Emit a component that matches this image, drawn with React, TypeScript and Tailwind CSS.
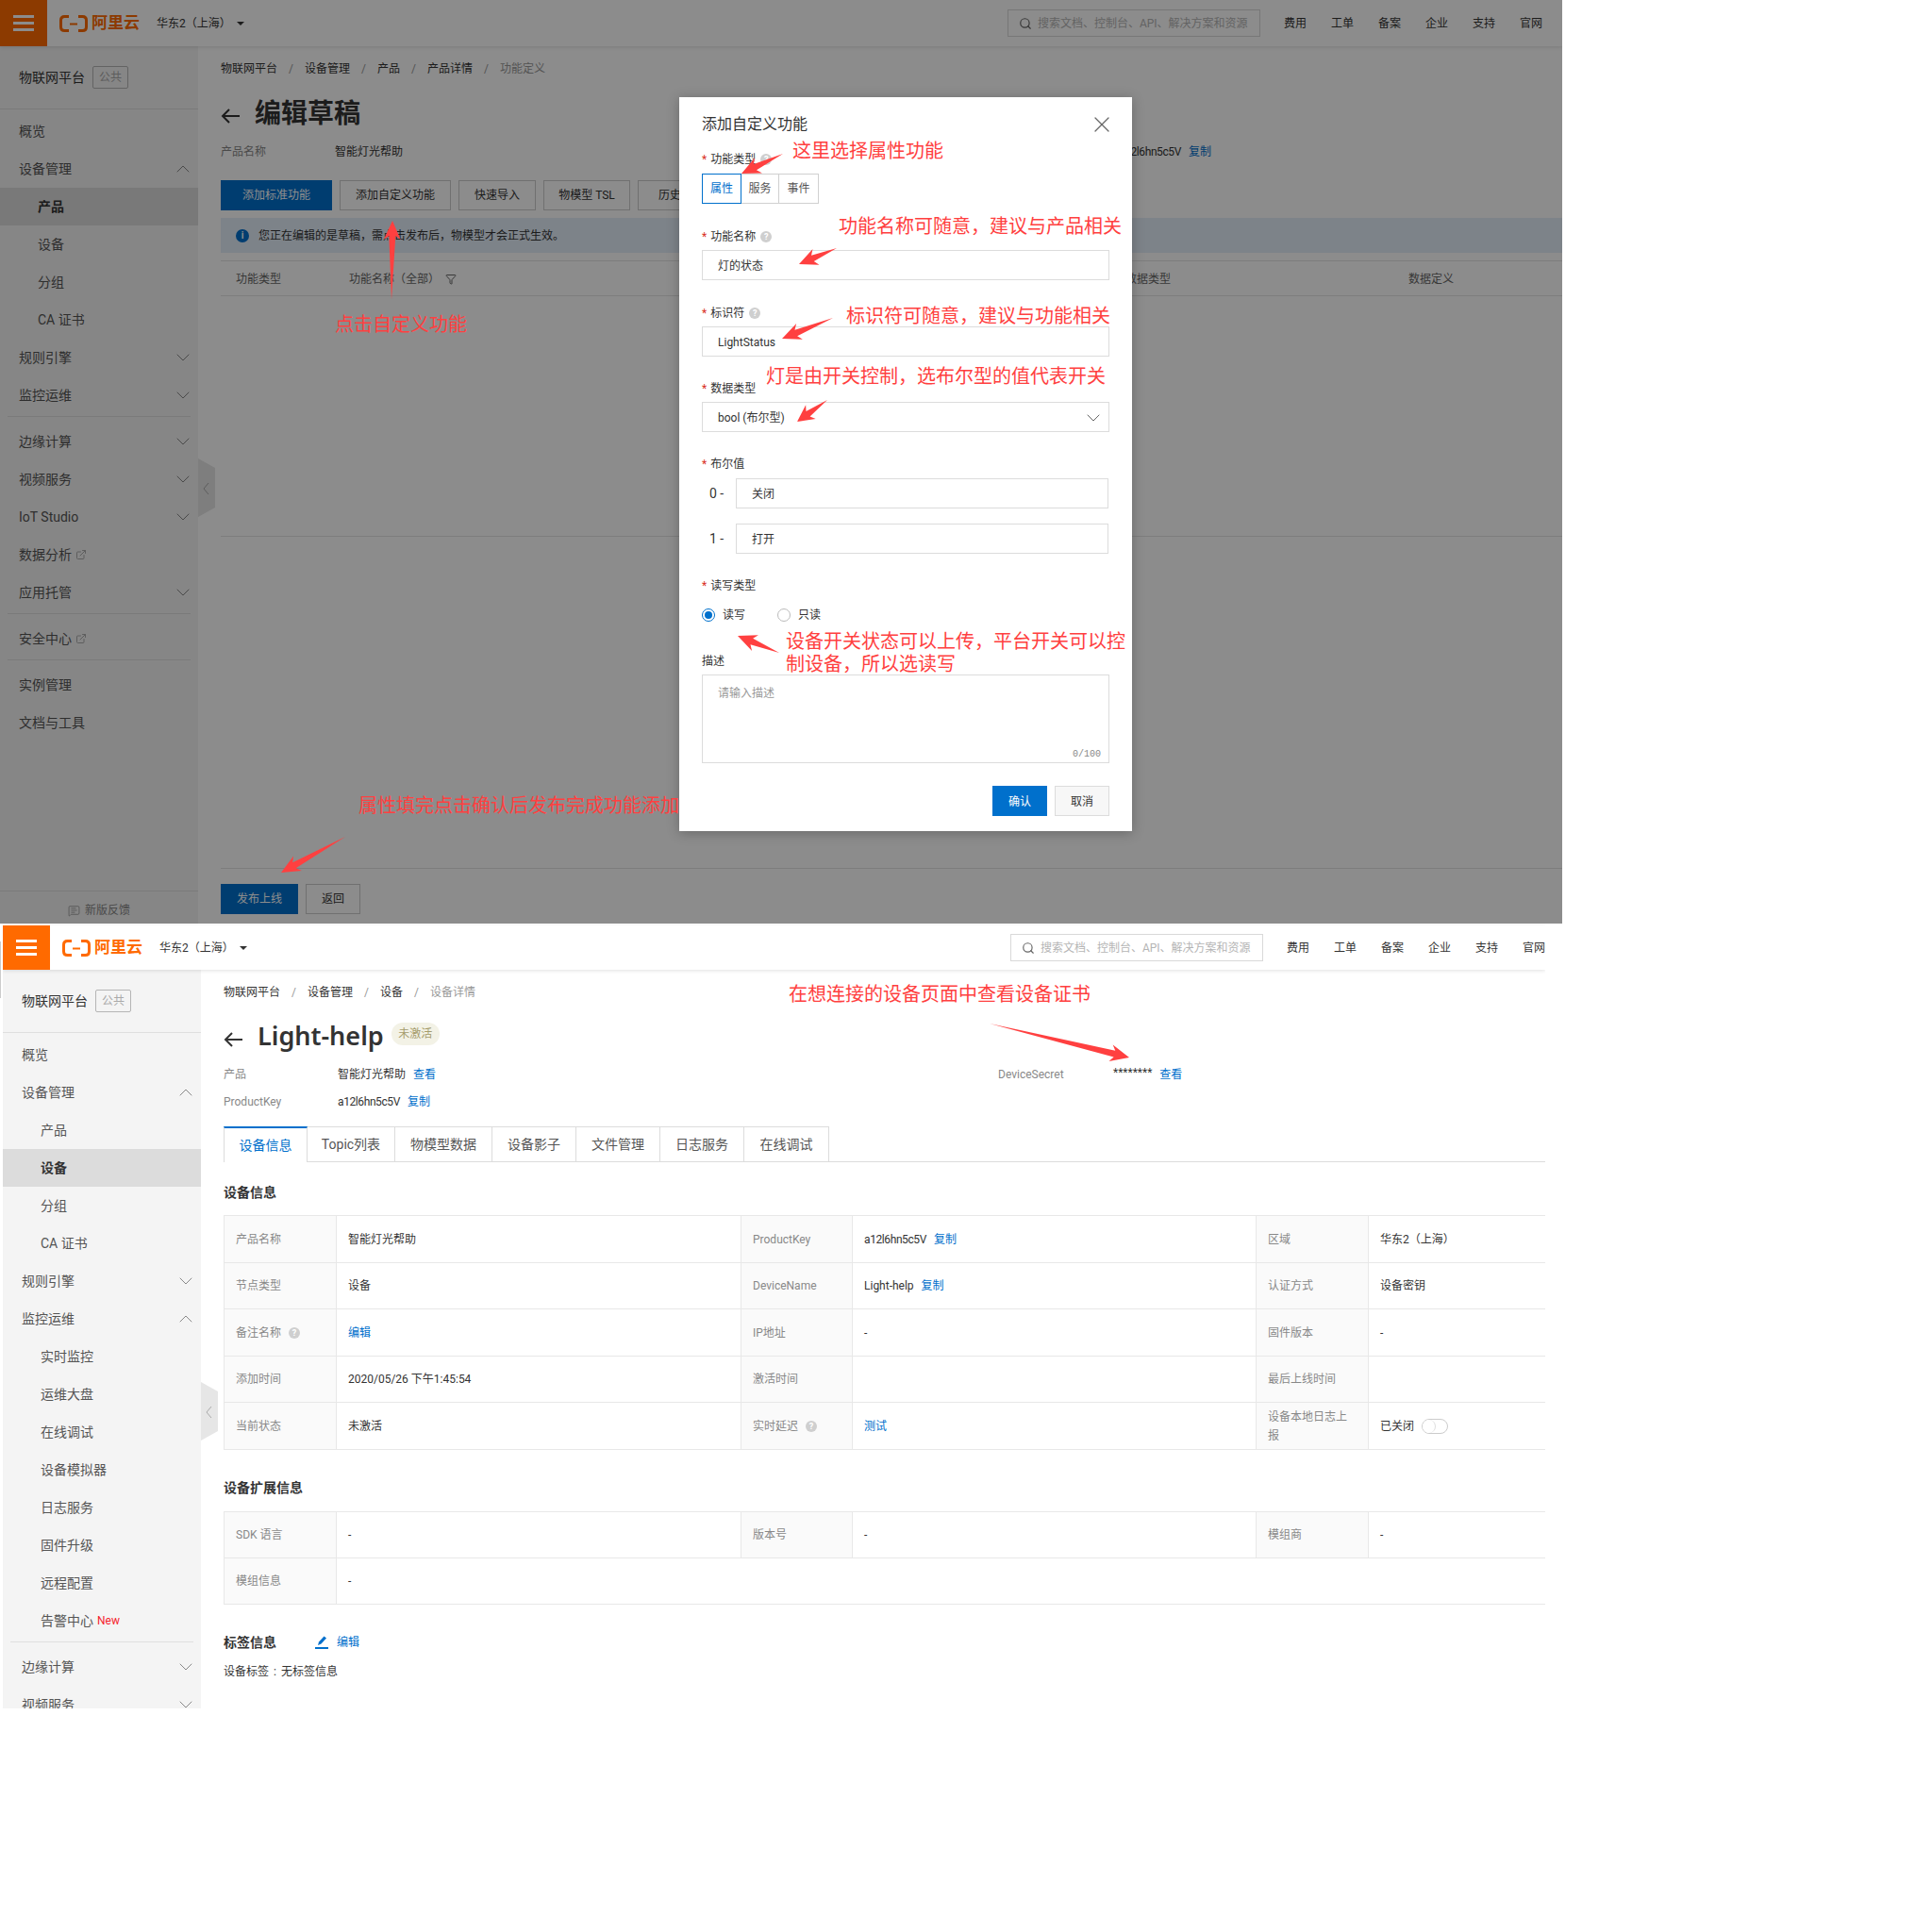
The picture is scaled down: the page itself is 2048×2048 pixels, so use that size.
import { ChevronDown, ChevronUp, ExternalLink, Filter, MessageSquareText, Search, X } from 'lucide-react';
import type { ReactNode } from 'react';

type NavItem = { label: string; sub?: boolean; active?: boolean; arrow?: 'up' | 'down'; ext?: boolean; isNew?: boolean; divider?: boolean };

const topNav: NavItem[] = [
  { label: '概览' },
  { label: '设备管理', arrow: 'up' },
  { label: '产品', sub: true, active: true },
  { label: '设备', sub: true },
  { label: '分组', sub: true },
  { label: 'CA 证书', sub: true },
  { label: '规则引擎', arrow: 'down' },
  { label: '监控运维', arrow: 'down', divider: true },
  { label: '边缘计算', arrow: 'down' },
  { label: '视频服务', arrow: 'down' },
  { label: 'IoT Studio', arrow: 'down' },
  { label: '数据分析', ext: true },
  { label: '应用托管', arrow: 'down', divider: true },
  { label: '安全中心', ext: true, divider: true },
  { label: '实例管理' },
  { label: '文档与工具' },
];

const bottomNav: NavItem[] = [
  { label: '概览' },
  { label: '设备管理', arrow: 'up' },
  { label: '产品', sub: true },
  { label: '设备', sub: true, active: true },
  { label: '分组', sub: true },
  { label: 'CA 证书', sub: true },
  { label: '规则引擎', arrow: 'down' },
  { label: '监控运维', arrow: 'up' },
  { label: '实时监控', sub: true },
  { label: '运维大盘', sub: true },
  { label: '在线调试', sub: true },
  { label: '设备模拟器', sub: true },
  { label: '日志服务', sub: true },
  { label: '固件升级', sub: true },
  { label: '远程配置', sub: true },
  { label: '告警中心', sub: true, isNew: true, divider: true },
  { label: '边缘计算', arrow: 'down' },
  { label: '视频服务', arrow: 'down' },
];

const arrows: [number, number, number, number][] = [
  [415, 318, 416, 234],
  [830, 163, 786, 184],
  [887, 263, 847, 280],
  [883, 337, 829, 359],
  [877, 424, 845, 447],
  [826, 692, 782, 674],
  [366, 887, 298, 925],
  [1049, 1085, 1197, 1121],
];

// thin tail that widens to a neck, then a swept head
function arrowPoints([x1, y1, x2, y2]: [number, number, number, number]) {
  const len = Math.hypot(x2 - x1, y2 - y1);
  const ux = (x2 - x1) / len;
  const uy = (y2 - y1) / len;
  const at = (back: number, side: number) => `${x2 - ux * back - uy * side},${y2 - uy * back + ux * side}`;
  const head = Math.min(20, len * 0.45);
  return [`${x1},${y1}`, at(head * 0.8, 3.5), at(head, 9), `${x2},${y2}`, at(head, -9), at(head * 0.8, -3.5)].join(' ');
}

function Logo() {
  return (
    <div className="flex items-center gap-[4px] text-[#ff6a00]">
      <svg width="30" height="18" viewBox="0 0 30 18" fill="none" stroke="#ff6a00">
        <path d="M10 1.5H5.5Q1.5 1.5 1.5 5.5V12.5Q1.5 16.5 5.5 16.5H10" strokeWidth="3" />
        <path d="M20 1.5H24.5Q28.5 1.5 28.5 5.5V12.5Q28.5 16.5 24.5 16.5H20" strokeWidth="3" />
        <path d="M11 9.5H19" strokeWidth="2" />
      </svg>
      <span className="text-[17px] font-bold leading-none">阿里云</span>
    </div>
  );
}

function Header({ className }: { className: string }) {
  return (
    <div className={`relative z-10 flex items-center bg-white shadow-[0_1px_4px_rgba(0,0,0,0.12)] ${className}`}>
      <div className="flex h-full w-[50px] flex-col items-center justify-center gap-[4px] bg-[#ff6a00]">
        <span className="h-[3px] w-[22px] bg-white" />
        <span className="h-[3px] w-[22px] bg-white" />
        <span className="h-[3px] w-[22px] bg-white" />
      </div>
      <div className="ml-[13px]">
        <Logo />
      </div>
      <span className="ml-[18px] text-xs text-[#333]">华东2（上海）</span>
      <span className="ml-[6px] h-0 w-0 border-x-[4px] border-t-[4px] border-x-transparent border-t-[#333]" />
      <div className="ml-auto flex h-[29px] w-[268px] items-center gap-[6px] border border-[#d9d9d9] pl-[11px]">
        <Search size={14} className="text-[#666]" />
        <span className="whitespace-nowrap text-xs text-[#b5b5b5]">搜索文档、控制台、API、解决方案和资源</span>
      </div>
      <div className="ml-[25px] flex gap-[26px] text-xs text-[#333]">
        {['费用', '工单', '备案', '企业', '支持', '官网'].map((t) => (
          <span key={t}>{t}</span>
        ))}
      </div>
    </div>
  );
}

function Sidebar({ items, footer }: { items: NavItem[]; footer?: boolean }) {
  return (
    <div className="relative flex w-[210px] shrink-0 flex-col bg-[#f4f4f4]">
      <div className="flex h-[67px] shrink-0 items-center border-b border-[#dfdfdf] pl-5 text-sm text-[#333]">
        物联网平台
        <span className="ml-2 flex h-6 w-[38px] items-center justify-center rounded-[2px] border border-[#b5b5b5] text-xs text-[#aaa]">公共</span>
      </div>
      <div className="shrink-0 pt-[3px]">
        {items.map((item) => (
          <div key={item.label}>
            <div
              className={`flex h-10 items-center justify-between pr-1 text-sm ${item.sub ? 'pl-10' : 'pl-5'} ${
                item.active ? 'bg-[#dcdcdc] font-bold text-[#333]' : 'text-[#555]'
              }`}
            >
              <span className="flex items-center gap-[4px]">
                {item.label}
                {item.ext && <ExternalLink size={12} className="text-[#aaa]" />}
                {item.isNew && <span className="text-xs text-[#f5222d]">New</span>}
              </span>
              {item.arrow === 'up' && <ChevronUp size={24} strokeWidth={1} className="text-[#888]" />}
              {item.arrow === 'down' && <ChevronDown size={24} strokeWidth={1} className="text-[#888]" />}
            </div>
            {item.divider && <div className="mx-2 mb-[6px] mt-[2px] h-px bg-[#dfdfdf]" />}
          </div>
        ))}
      </div>
      {footer && (
        <div className="mt-auto flex h-[35px] items-center justify-center gap-[5px] border-t border-[#dfdfdf] pt-[6px] text-xs text-[#888]">
          <MessageSquareText size={13} strokeWidth={1.3} />
          新版反馈
        </div>
      )}
      <svg className="absolute left-full top-[437px]" width="18" height="62" viewBox="0 0 18 62">
        <polygon points="0,0 18,10 18,52 0,62" fill="#e6e6e6" />
        <polyline points="11,26 6,32 11,38" fill="none" stroke="#aaa" />
      </svg>
    </div>
  );
}

function Crumbs({ items, last }: { items: string[]; last: string }) {
  return (
    <div className="mt-[14px] flex h-5 shrink-0 items-center text-xs text-[#333]">
      {items.map((t) => (
        <span key={t} className="flex items-center">
          {t}
          <span className="mx-3 text-[#999]">/</span>
        </span>
      ))}
      <span className="text-[#999]">{last}</span>
    </div>
  );
}

function BackArrow() {
  return (
    <svg width="20" height="20" viewBox="0 0 20 20" fill="none" stroke="#333" strokeWidth="2" className="mt-[4px]">
      <path d="M20 10H2M9 3L2 10L9 17" />
    </svg>
  );
}

function Btn({ className, children }: { className: string; children: ReactNode }) {
  return <div className={`flex h-8 items-center justify-center text-xs ${className}`}>{children}</div>;
}

function Label({ children, help, className }: { children: ReactNode; help?: boolean; className: string }) {
  return (
    <div className={`flex h-[18px] items-center pt-[2px] text-xs text-[#333] ${className}`}>
      <span className="mr-[4px] text-[#d93026]">*</span>
      {children}
      {help && <Help className="ml-[5px]" />}
    </div>
  );
}

function Help({ className }: { className?: string }) {
  return <span className={`flex h-3 w-3 items-center justify-center rounded-full bg-[#cfcfcf] text-[9px] font-bold text-white ${className ?? ''}`}>?</span>;
}

function Field({ children, className }: { children: ReactNode; className?: string }) {
  return <div className={`flex h-8 items-center justify-between border border-[#dcdcdc] pl-4 pr-2 pt-[2px] text-xs text-[#333] ${className ?? ''}`}>{children}</div>;
}

function Modal() {
  return (
    <div className="absolute left-[720px] top-[103px] z-20 h-[778px] w-[480px] bg-white px-6 pt-[18px] shadow-[0_2px_12px_rgba(0,0,0,0.25)]">
      <div className="flex h-5 items-center justify-between pt-[2px] text-base text-[#333]">
        添加自定义功能
        <X size={28} strokeWidth={1.1} className="-mr-[6px] text-[#666]" />
      </div>
      <Label help className="mt-[18px]">功能类型</Label>
      <div className="mt-[7px] flex h-8 text-xs text-[#555]">
        <span className="flex w-[42px] items-center justify-center border border-[#0070cc] text-[#0070cc]">属性</span>
        <span className="flex w-10 items-center justify-center border-y border-r border-[#d0d0d0]">服务</span>
        <span className="flex w-[42px] items-center justify-center border-y border-r border-[#d0d0d0]">事件</span>
      </div>
      <Label help className="mt-[25px]">功能名称</Label>
      <Field className="mt-[6px]">灯的状态</Field>
      <Label help className="mt-[25px]">标识符</Label>
      <Field className="mt-[6px]">LightStatus</Field>
      <Label className="mt-[24px]">数据类型</Label>
      <Field className="mt-[6px]">
        bool (布尔型)
        <ChevronDown size={24} strokeWidth={1} className="-mr-[4px] text-[#666]" />
      </Field>
      <Label className="mt-[24px]">布尔值</Label>
      <div className="mt-[7px] flex items-center text-sm text-[#333]">
        <span className="w-9 pl-2">0 -</span>
        <Field className="w-[395px]">关闭</Field>
      </div>
      <div className="mt-4 flex items-center text-sm text-[#333]">
        <span className="w-9 pl-2">1 -</span>
        <Field className="w-[395px]">打开</Field>
      </div>
      <Label className="mt-[24px]">读写类型</Label>
      <div className="mt-[14px] flex h-[18px] items-center text-xs text-[#333]">
        <span className="flex h-[14px] w-[14px] items-center justify-center rounded-full border border-[#0070cc]">
          <span className="h-2 w-2 rounded-full bg-[#0070cc]" />
        </span>
        <span className="ml-2 w-[58px]">读写</span>
        <span className="h-[14px] w-[14px] rounded-full border border-[#bbb]" />
        <span className="ml-2">只读</span>
      </div>
      <div className="mt-[30px] flex h-[18px] items-center pt-[2px] text-xs text-[#333]">描述</div>
      <div className="relative mt-[6px] h-[94px] border border-[#dcdcdc] pl-4 pt-[11px] text-xs text-[#999]">
        请输入描述
        <span className="absolute bottom-[2px] right-[8px] font-['Liberation_Mono',monospace] text-[10px] text-[#888]">0/100</span>
      </div>
      <div className="mt-6 flex justify-end gap-2">
        <Btn className="w-[58px] bg-[#0070cc] pt-[2px] text-white">确认</Btn>
        <Btn className="w-[58px] border border-[#dcdcdc] bg-[#f7f7f7] pt-[2px] text-[#333]">取消</Btn>
      </div>
    </div>
  );
}

function TopScreen() {
  return (
    <div className="relative flex h-[979px] w-[1656px] flex-col overflow-hidden bg-white">
      <Header className="h-[49px] pr-[21px]" />
      <div className="flex min-h-0 flex-1">
        <Sidebar items={topNav} footer />
        <div className="flex min-w-0 flex-1 flex-col pl-6">
          <Crumbs items={['物联网平台', '设备管理', '产品', '产品详情']} last="功能定义" />
          <div className="mt-[18px] flex h-10 items-center gap-4">
            <BackArrow />
            <span className="text-[28px] font-bold text-[#333]">编辑草稿</span>
          </div>
          <div className="mt-[10px] flex h-5 items-center text-xs">
            <span className="w-[121px] text-[#888]">产品名称</span>
            <span className="w-[831px] text-[#333]">智能灯光帮助</span>
            <span className="tracking-[-0.4px] text-[#333]">a12l6hn5c5V</span>
            <span className="ml-2 text-[#0070cc]">复制</span>
          </div>
          <div className="mt-5 flex gap-2">
            <Btn className="w-[118px] bg-[#0070cc] text-white">添加标准功能</Btn>
            <Btn className="w-[118px] border border-[#ccc] text-[#333]">添加自定义功能</Btn>
            <Btn className="w-[82px] border border-[#ccc] text-[#333]">快速导入</Btn>
            <Btn className="w-[92px] border border-[#ccc] text-[#333]">物模型 TSL</Btn>
            <Btn className="w-[92px] border border-[#ccc] text-[#333]">历史版本</Btn>
          </div>
          <div className="mt-2 flex h-[37px] items-center gap-[10px] bg-[#e3eefa] pl-4 text-xs text-[#333]">
            <span className="flex h-[14px] w-[14px] items-center justify-center rounded-full bg-[#0070cc] text-[10px] font-bold text-white">i</span>
            您正在编辑的是草稿，需点击发布后，物模型才会正式生效。
          </div>
          <div className="mt-2 flex h-[38px] items-center border-y border-[#e3e3e3] pt-[2px] text-xs text-[#666]">
            <span className="w-[120px] pl-4">功能类型</span>
            <span className="flex w-[823px] items-center gap-[6px] pl-4">
              功能名称（全部）
              <Filter size={12} className="text-[#666]" />
            </span>
            <span className="w-[300px] pl-4">数据类型</span>
            <span className="pl-4">数据定义</span>
          </div>
          <div className="h-[255px] border-b border-[#e3e3e3]" />
          <div className="mt-auto flex h-[59px] gap-2 border-t border-[#e3e3e3] pt-4">
            <Btn className="w-[82px] bg-[#0070cc] text-white">发布上线</Btn>
            <Btn className="w-[58px] border border-[#ccc] text-[#333]">返回</Btn>
          </div>
        </div>
      </div>
      <div className="absolute inset-0 z-10 bg-black/45" />
      <Modal />
    </div>
  );
}

function L({ children, className }: { children: ReactNode; className?: string }) {
  return <td className={`border border-l-0 border-[#e8e8e8] bg-[#fafafa] pl-3 pr-3 leading-5 text-[#888] first:border-l ${className ?? ''}`}>{children}</td>;
}

function V({ children, colSpan }: { children?: ReactNode; colSpan?: number }) {
  return <td colSpan={colSpan} className="border-y border-r border-[#e8e8e8] pl-3 text-[#333] last:border-r-0">{children}</td>;
}

function Link({ children }: { children: ReactNode }) {
  return <span className="ml-2 text-[#0070cc]">{children}</span>;
}

function Cols() {
  return (
    <colgroup>
      <col className="w-[119px]" />
      <col className="w-[429px]" />
      <col className="w-[118px]" />
      <col className="w-[428px]" />
      <col className="w-[119px]" />
      <col />
    </colgroup>
  );
}

function HelpLabel({ children }: { children: ReactNode }) {
  return (
    <span className="flex items-center gap-[8px]">
      {children}
      <Help />
    </span>
  );
}

function BottomScreen() {
  const tabs = [
    ['设备信息', 'w-[89px]'],
    ['Topic列表', 'w-[93px]'],
    ['物模型数据', 'w-[103px]'],
    ['设备影子', 'w-[89px]'],
    ['文件管理', 'w-[89px]'],
    ['日志服务', 'w-[89px]'],
    ['在线调试', 'w-[90px]'],
  ];
  return (
    <div className="ml-[3px] flex h-[832px] w-[1635px] flex-col overflow-hidden bg-white pt-[2px]">
      <Header className="h-[47px] shrink-0" />
      <div className="flex min-h-0 flex-1">
        <Sidebar items={bottomNav} />
        <div className="min-w-0 flex-1 pl-6">
          <Crumbs items={['物联网平台', '设备管理', '设备']} last="设备详情" />
          <div className="mt-[18px] flex h-10 items-center gap-4">
            <BackArrow />
            <span className="-mt-[3px] font-['Noto_Sans',sans-serif] text-[27px] font-semibold text-[#333]">Light-help</span>
            <span className="-ml-2 -mt-[8px] flex h-6 w-[51px] items-center justify-center rounded-xl bg-[#f3f2e6] text-xs text-[#a59c6c]">未激活</span>
          </div>
          <div className="mt-[9px] flex h-5 items-center text-xs">
            <span className="w-[121px] text-[#888]">产品</span>
            <span className="text-[#333]">智能灯光帮助</span>
            <span className="ml-2 w-[620px] text-[#0070cc]">查看</span>
            <span className="w-[122px] text-[#888]">DeviceSecret</span>
            <span className="-mt-[4px] text-[#333]">********</span>
            <span className="ml-2 text-[#0070cc]">查看</span>
          </div>
          <div className="mt-[9px] flex h-5 items-center text-xs">
            <span className="w-[121px] text-[#888]">ProductKey</span>
            <span className="tracking-[-0.4px] text-[#333]">a12l6hn5c5V</span>
            <Link>复制</Link>
          </div>
          <div className="mt-4 flex h-[38px] border-b border-[#dcdcdc] text-sm text-[#555]">
            {tabs.map(([t, w], i) =>
              i === 0 ? (
                <span key={t} className="-mb-px flex h-[38px] w-[89px] items-center justify-center border-x border-t-2 border-x-[#dcdcdc] border-t-[#0070cc] bg-white text-[#0070cc]">{t}</span>
              ) : (
                <span key={t} className={`flex items-center justify-center border-r border-t border-[#dcdcdc] ${w}`}>{t}</span>
              ),
            )}
          </div>
          <div className="mt-[22px] flex h-5 items-center text-sm font-bold text-[#333]">设备信息</div>
          <table className="mt-[14px] w-[1401px] table-fixed text-xs">
            <Cols />
            <tbody>
              <tr className="h-[50px]">
                <L>产品名称</L><V>智能灯光帮助</V>
                <L>ProductKey</L><V><span className="tracking-[-0.4px]">a12l6hn5c5V</span><Link>复制</Link></V>
                <L>区域</L><V>华东2（上海）</V>
              </tr>
              <tr className="h-[49px]">
                <L>节点类型</L><V>设备</V>
                <L>DeviceName</L><V>Light-help<Link>复制</Link></V>
                <L>认证方式</L><V>设备密钥</V>
              </tr>
              <tr className="h-[50px]">
                <L><HelpLabel>备注名称</HelpLabel></L><V><span className="text-[#0070cc]">编辑</span></V>
                <L>IP地址</L><V>-</V>
                <L>固件版本</L><V>-</V>
              </tr>
              <tr className="h-[49px]">
                <L>添加时间</L><V>2020/05/26 下午1:45:54</V>
                <L>激活时间</L><V />
                <L>最后上线时间</L><V />
              </tr>
              <tr className="h-[50px]">
                <L>当前状态</L><V>未激活</V>
                <L><HelpLabel>实时延迟</HelpLabel></L><V><span className="text-[#0070cc]">测试</span></V>
                <L>设备本地日志上报</L>
                <V>
                  <span className="flex items-center gap-2">
                    已关闭
                    <span className="flex h-4 w-7 items-center rounded-full border border-[#ccc] bg-white">
                      <span className="h-[14px] w-[14px] rounded-full border-r border-[#ddd] bg-white" />
                    </span>
                  </span>
                </V>
              </tr>
            </tbody>
          </table>
          <div className="mt-[30px] flex h-5 items-center text-sm font-bold text-[#333]">设备扩展信息</div>
          <table className="mt-[15px] w-[1401px] table-fixed text-xs">
            <Cols />
            <tbody>
              <tr className="h-[49px]">
                <L>SDK 语言</L><V>-</V>
                <L>版本号</L><V>-</V>
                <L>模组商</L><V>-</V>
              </tr>
              <tr className="h-[49px]">
                <L>模组信息</L><V colSpan={5}>-</V>
              </tr>
            </tbody>
          </table>
          <div className="mt-[30px] flex h-5 items-center text-sm font-bold text-[#333]">
            标签信息
            <svg width="14" height="14" viewBox="0 0 14 14" className="ml-[41px]" fill="#0070cc">
              <polygon points="3,10 4,6.5 9.5,0.5 12,2.5 6.5,8.5" />
              <rect x="0" y="12" width="14" height="2" />
            </svg>
            <span className="ml-[9px] text-xs font-normal text-[#0070cc]">编辑</span>
          </div>
          <div className="mt-[11px] flex h-5 items-center text-xs text-[#333]">
            设备标签<span className="mx-[5px]">:</span>无标签信息
          </div>
        </div>
      </div>
    </div>
  );
}

function Note({ className, children }: { className: string; children: ReactNode }) {
  return <div className={`absolute z-30 text-[20px] leading-6 text-[#ff4040] ${className}`}>{children}</div>;
}

export default function App() {
  return (
    <div className="relative h-[2048px] w-[2048px] overflow-hidden bg-white font-[Roboto,'Noto_Sans_CJK_SC',sans-serif]">
      <TopScreen />
      <BottomScreen />
      <div className="absolute left-0 top-[998px] h-[60px] w-px bg-[#ccc]" />
      <Note className="left-[355px] top-[332px] whitespace-nowrap text-[19.5px]">点击自定义功能</Note>
      <Note className="left-[840px] top-[148px] whitespace-nowrap">这里选择属性功能</Note>
      <Note className="left-[889px] top-[228px] whitespace-nowrap">功能名称可随意，建议与产品相关</Note>
      <Note className="left-[897px] top-[323px] whitespace-nowrap">标识符可随意，建议与功能相关</Note>
      <Note className="left-[812px] top-[387px] whitespace-nowrap">灯是由开关控制，选布尔型的值代表开关</Note>
      <Note className="left-[833px] top-[668px] w-[362px]">设备开关状态可以上传，平台开关可以控制设备，所以选读写</Note>
      <Note className="left-[380px] top-[842px] whitespace-nowrap">属性填完点击确认后发布完成功能添加</Note>
      <Note className="left-[836px] top-[1042px] whitespace-nowrap">在想连接的设备页面中查看设备证书</Note>
      <svg className="pointer-events-none absolute inset-0 z-30" width="2048" height="2048" viewBox="0 0 2048 2048">
        {arrows.map((a) => (
          <polygon key={a.join()} points={arrowPoints(a)} fill="#ff4040" />
        ))}
      </svg>
    </div>
  );
}
